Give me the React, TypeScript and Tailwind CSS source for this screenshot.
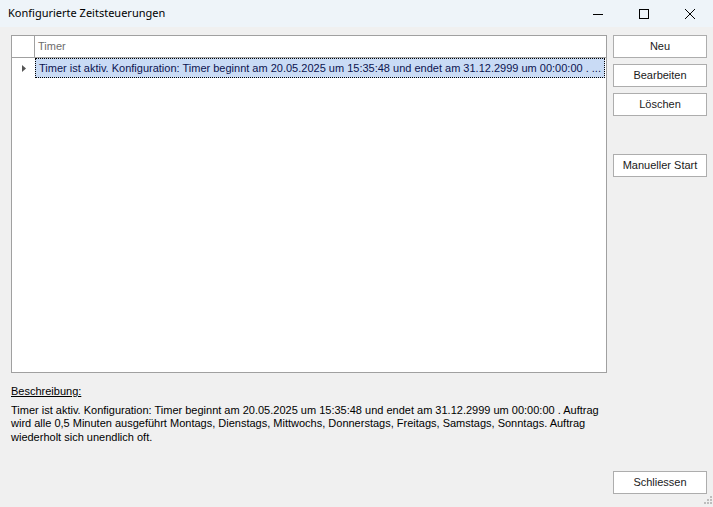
import React from 'react';

const rowText =
  'Timer ist aktiv. Konfiguration: Timer beginnt am 20.05.2025 um 15:35:48 und endet am 31.12.2999 um 00:00:00 . ...';

function WinButton({ label, className = '' }: { label: string; className?: string }) {
  return (
    <button
      className={`h-[23px] w-[94px] border border-[#adadad] bg-white text-[11px] text-[#1a1a1a] ${className}`}
    >
      {label}
    </button>
  );
}

export default function App() {
  return (
    <div
      className="relative flex h-[507px] w-[713px] flex-col overflow-hidden bg-[#f0f0f0] text-black"
      style={{ fontFamily: '"Liberation Sans", Arial, sans-serif' }}
    >
      {/* Title bar */}
      <div className="flex h-[27px] shrink-0 items-center bg-[#eef4f9]">
        <span
          className="pl-[8px] text-[11px] text-black"
          style={{ fontFamily: '"Noto Sans", "Open Sans", sans-serif' }}
        >
          Konfigurierte Zeitsteuerungen
        </span>
        <div className="ml-auto flex h-full items-center">
          <div className="flex h-full w-[46px] items-center justify-center">
            <svg width="10" height="10" viewBox="0 0 10 10">
              <line x1="0" y1="5.5" x2="10" y2="5.5" stroke="#000" strokeWidth="1" />
            </svg>
          </div>
          <div className="flex h-full w-[46px] items-center justify-center">
            <svg width="10" height="10" viewBox="0 0 10 10">
              <rect x="0.5" y="0.5" width="9" height="9" fill="none" stroke="#000" strokeWidth="1" />
            </svg>
          </div>
          <div className="flex h-full w-[46px] items-center justify-center">
            <svg width="10" height="10" viewBox="0 0 10 10">
              <line x1="0" y1="0" x2="10" y2="10" stroke="#000" strokeWidth="1" />
              <line x1="10" y1="0" x2="0" y2="10" stroke="#000" strokeWidth="1" />
            </svg>
          </div>
        </div>
      </div>

      {/* Body */}
      <div className="flex min-h-0 flex-1 pl-[11px] pt-[8px] pb-[13px] pr-[6px]">
        {/* Left column */}
        <div className="flex w-[596px] flex-col">
          <div className="flex h-[338px] flex-col border border-[#a0a0a0] bg-white">
            {/* Header */}
            <div className="flex h-[22px] shrink-0 border-b border-[#a0a0a0]">
              <div className="w-[23px] shrink-0 border-r border-[#a0a0a0]" />
              <div className="flex items-center pl-[3px] text-[11px] text-[#6d6d6d]">Timer</div>
            </div>
            {/* Row */}
            <div className="flex h-[20px] shrink-0">
              <div className="flex w-[23px] shrink-0 items-center justify-center">
                <svg width="4" height="7" viewBox="0 0 4 7">
                  <polygon points="0,0 4,3.5 0,7" fill="#555" />
                </svg>
              </div>
              <div className="mr-[1px] flex min-w-0 flex-1 items-center overflow-hidden whitespace-nowrap border border-dotted border-black bg-[#c9dbf5] pl-[3px] text-[11px] text-[#0c1450]">
                {rowText}
              </div>
            </div>
          </div>

          <div className="pt-[12px] text-[11px] leading-[13.5px]">
            <div className="underline">Beschreibung:</div>
            <p className="mt-[5px] pr-[4px]">
              Timer ist aktiv. Konfiguration: Timer beginnt am 20.05.2025 um 15:35:48 und endet am
              31.12.2999 um 00:00:00 . Auftrag wird alle 0,5 Minuten ausgeführt Montags, Dienstags,
              Mittwochs, Donnerstags, Freitags, Samstags, Sonntags. Auftrag wiederholt sich
              unendlich oft.
            </p>
          </div>
        </div>

        {/* Right column */}
        <div className="ml-[6px] flex flex-col">
          <WinButton label="Neu" />
          <WinButton label="Bearbeiten" className="mt-[6px]" />
          <WinButton label="Löschen" className="mt-[6px]" />
          <WinButton label="Manueller Start" className="mt-[38px]" />
          <WinButton label="Schliessen" className="mt-auto" />
        </div>
      </div>

      {/* Resize grip */}
      <svg width="10" height="10" viewBox="0 0 10 10" className="absolute bottom-[1px] right-[1px]">
        <g fill="#bdbdbd">
          <rect x="8" y="0" width="2" height="2" />
          <rect x="5" y="3" width="2" height="2" />
          <rect x="8" y="3" width="2" height="2" />
          <rect x="2" y="6" width="2" height="2" />
          <rect x="5" y="6" width="2" height="2" />
          <rect x="8" y="6" width="2" height="2" />
        </g>
      </svg>
    </div>
  );
}
